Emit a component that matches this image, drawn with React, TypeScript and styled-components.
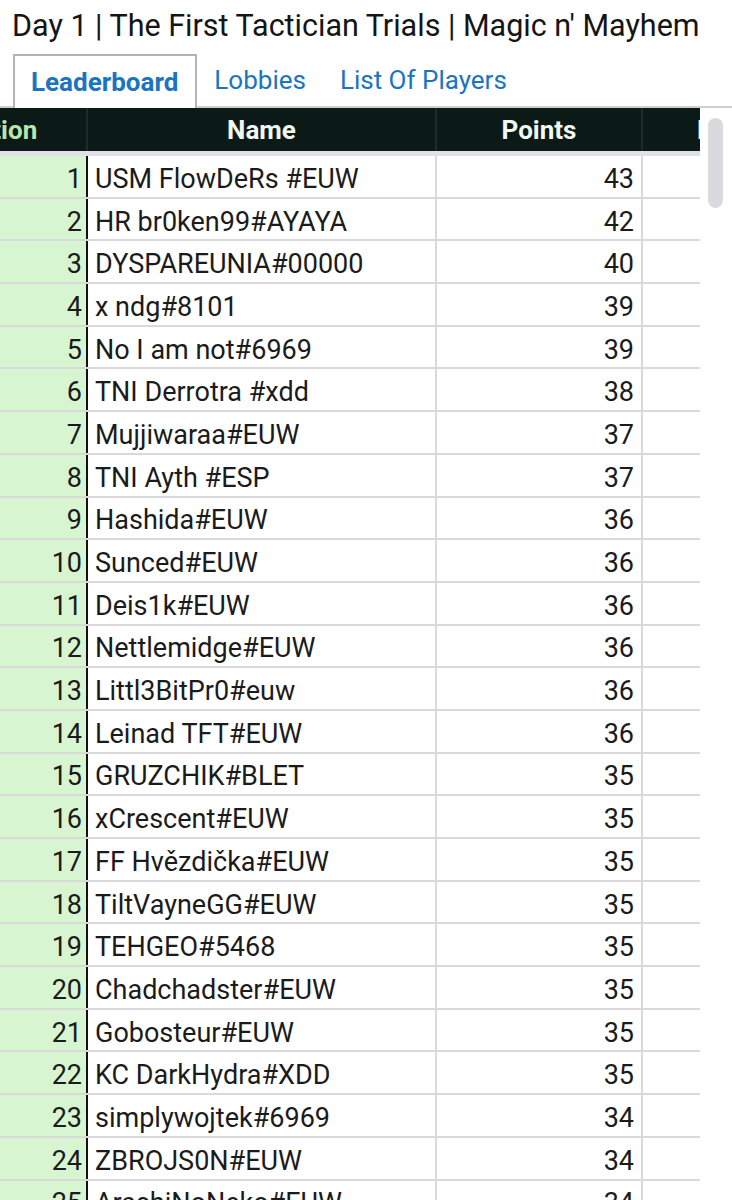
import React from "react";
import styled, { createGlobalStyle } from "styled-components";

const GlobalStyle = createGlobalStyle`
  html, body { margin: 0; padding: 0; background: #ffffff; }
  body { font-family: Roboto, "Noto Sans", Arial, sans-serif; color: #1b1b1b; overflow: hidden; height: 1200px; }
`;

const Page = styled.div`
  width: 732px;
  height: 1200px;
  overflow: hidden;
  position: relative;
`;

const Title = styled.h1`
  margin: 0;
  padding: 7px 0 0 12px;
  font-size: 30.5px;
  font-weight: 400;
  line-height: 38px;
  color: #151515;
  white-space: nowrap;
`;

const TabBar = styled.div`
  display: flex;
  align-items: flex-end;
  margin-top: 9px;
  padding-left: 13px;
  border-bottom: 2px solid #cfcfcf;
  height: 54px;
  box-sizing: border-box;
`;

const Tab = styled.div<{ $active?: boolean }>`
  height: ${(p) => (p.$active ? "54px" : "52px")};
  box-sizing: border-box;
  display: flex;
  align-items: center;
  padding: 0 17px 0 ${(p) => (p.$active ? "16px" : "17px")};
  font-size: 26px;
  font-weight: ${(p) => (p.$active ? 700 : 400)};
  color: #1a74c2;
  background: #fff;
  border: ${(p) => (p.$active ? "2px solid #b4b4b4" : "none")};
  border-bottom: none;
  margin-bottom: ${(p) => (p.$active ? "-2px" : "0")};
`;

const Viewport = styled.div`
  width: 700px;
  overflow: hidden;
`;

const Grid = styled.div`
  margin-left: -108px;
  width: 939px;
`;

const cols = "196px 349px 206px 188px";

const HeaderRow = styled.div`
  display: grid;
  grid-template-columns: ${cols};
  height: 48px;
  background: #0b1a16;
  border-bottom: 5px solid #dfe1e6;
  box-sizing: border-box;
`;

const HeadCell = styled.div<{ $green?: boolean; $last?: boolean }>`
  display: flex;
  align-items: center;
  justify-content: ${(p) => (p.$last ? "flex-start" : "center")};
  padding-left: ${(p) => (p.$last ? "54px" : "0")};
  font-size: 26px;
  font-weight: 700;
  color: ${(p) => (p.$green ? "#b6e6ad" : "#f3f7f4")};
  border-right: 2px solid #1d2c28;
  box-sizing: border-box;
`;

const Row = styled.div`
  display: grid;
  grid-template-columns: ${cols};
  height: 42.7px;
  border-bottom: 2px solid #d9d9d9;
  box-sizing: border-box;
`;

const PosCell = styled.div`
  background: #d8f5d1;
  border-right: 2px solid #121212;
  display: flex;
  align-items: center;
  justify-content: flex-end;
  padding: 5px 4px 0 0;
  font-size: 27px;
  box-sizing: border-box;
`;

const NameCell = styled.div`
  display: flex;
  align-items: center;
  padding: 5px 0 0 7px;
  font-size: 27px;
  border-right: 2px solid #d9d9d9;
  white-space: nowrap;
  overflow: hidden;
  box-sizing: border-box;
`;

const PointsCell = styled.div`
  display: flex;
  align-items: center;
  justify-content: flex-end;
  padding: 5px 7px 0 0;
  font-size: 27px;
  border-right: 2px solid #d9d9d9;
  box-sizing: border-box;
`;

const EmptyCell = styled.div``;

const ScrollThumb = styled.div`
  position: absolute;
  left: 708px;
  top: 118px;
  width: 15px;
  height: 90px;
  border-radius: 8px;
  background: #dadade;
`;

const players: [string, number][] = [
  ["USM FlowDeRs #EUW", 43],
  ["HR br0ken99#AYAYA", 42],
  ["DYSPAREUNIA#00000", 40],
  ["x ndg#8101", 39],
  ["No I am not#6969", 39],
  ["TNI Derrotra #xdd", 38],
  ["Mujjiwaraa#EUW", 37],
  ["TNI Ayth #ESP", 37],
  ["Hashida#EUW", 36],
  ["Sunced#EUW", 36],
  ["Deis1k#EUW", 36],
  ["Nettlemidge#EUW", 36],
  ["Littl3BitPr0#euw", 36],
  ["Leinad TFT#EUW", 36],
  ["GRUZCHIK#BLET", 35],
  ["xCrescent#EUW", 35],
  ["FF Hvězdička#EUW", 35],
  ["TiltVayneGG#EUW", 35],
  ["TEHGEO#5468", 35],
  ["Chadchadster#EUW", 35],
  ["Gobosteur#EUW", 35],
  ["KC DarkHydra#XDD", 35],
  ["simplywojtek#6969", 34],
  ["ZBROJS0N#EUW", 34],
  ["ArashiNoNeko#EUW", 34],
  ["Kaiser#EUW", 34],
];

export default function App() {
  return (
    <Page>
      <GlobalStyle />
      <Title>Day 1 | The First Tactician Trials | Magic n' Mayhem</Title>
      <TabBar>
        <Tab $active>Leaderboard</Tab>
        <Tab>Lobbies</Tab>
        <Tab>List Of Players</Tab>
      </TabBar>
      <Viewport>
        <Grid>
          <HeaderRow>
            <HeadCell $green>Position</HeadCell>
            <HeadCell>Name</HeadCell>
            <HeadCell>Points</HeadCell>
            <HeadCell $last>Played</HeadCell>
          </HeaderRow>
          {players.map(([name, pts], i) => (
            <Row key={i}>
              <PosCell>{i + 1}</PosCell>
              <NameCell>{name}</NameCell>
              <PointsCell>{pts}</PointsCell>
              <EmptyCell />
            </Row>
          ))}
        </Grid>
      </Viewport>
      <ScrollThumb />
    </Page>
  );
}
